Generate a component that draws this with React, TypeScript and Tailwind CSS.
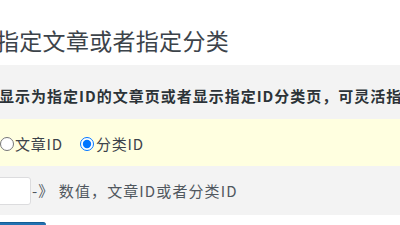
import React, { useState } from 'react';

const font = { fontFamily: '"Noto Sans CJK SC", "Liberation Sans", sans-serif' };

export default function App() {
    const [kind, setKind] = useState<'post' | 'cat'>('cat');
    const [value, setValue] = useState('');

    return (
        <div className="w-[400px] h-[225px] overflow-hidden bg-white text-[#3c434a]" style={font}>
            <div className="h-[65px] pt-[24px] -ml-[4px]">
                <h2 className="text-[23px] leading-[32px] font-normal tracking-[0.3px] text-[#3c434a] whitespace-nowrap">指定文章或者指定分类</h2>
            </div>

            <div className="h-[54px] bg-[#f3f3f3] flex items-center pt-[7px] -ml-[1px]">
                <p className="text-[15px] leading-[20px] font-bold tracking-[1px] text-[#2c3338] whitespace-nowrap">显示为指定ID的文章页或者显示指定ID分类页，可灵活指定显示内容</p>
            </div>

            <div className="h-[47px] bg-[#ffffe0] flex items-center gap-[17px] pt-[2px]">
                <label className="flex items-center text-[15px] leading-[20px] tracking-[0.8px] whitespace-nowrap">
                    <input type="radio" name="kind" checked={kind === 'post'} onChange={() => setKind('post')} className="m-0 mr-[1px] w-[14px] h-[14px]" />
                    文章ID
                </label>
                <label className="flex items-center text-[15px] leading-[20px] tracking-[0.8px] whitespace-nowrap">
                    <input type="radio" name="kind" checked={kind === 'cat'} onChange={() => setKind('cat')} className="m-0 mr-[2px] w-[14px] h-[14px]" />
                    分类ID
                </label>
            </div>

            <div className="h-[49px] bg-[#f3f3f3] flex items-center">
                <input value={value} onChange={e => setValue(e.target.value)} className="-ml-[20px] w-[51px] h-[28px] bg-white border border-[#dcdcde] rounded-[3px] outline-none" />
                <span className="ml-[1px] text-[15px] leading-[20px] tracking-[1.1px] whitespace-nowrap text-[#50575e]">-》 数值，文章ID或者分类ID</span>
            </div>

            <div className="h-[10px] bg-white flex items-end">
                <button className="-ml-[4px] w-[50px] h-[3px] bg-[#2271b1] border-t border-[#135e96] rounded-tr-[3px]" />
            </div>
        </div>
    );
}
